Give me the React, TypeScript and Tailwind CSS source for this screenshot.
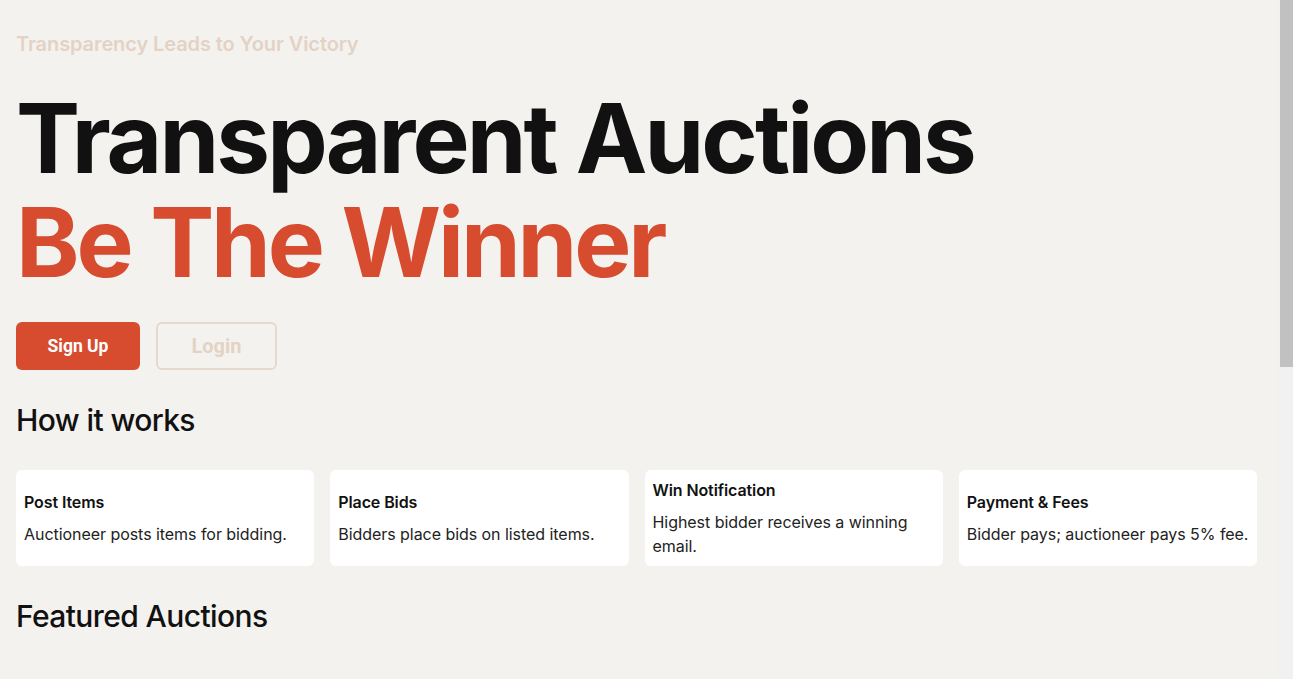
import React from "react";

const steps = [
  { title: "Post Items", desc: "Auctioneer posts items for bidding." },
  { title: "Place Bids", desc: "Bidders place bids on listed items." },
  { title: "Win Notification", desc: "Highest bidder receives a winning email." },
  { title: "Payment & Fees", desc: "Bidder pays; auctioneer pays 5% fee." },
];

export default function App() {
  return (
    <div className="min-h-[1256px] bg-[#f4f2ef]">
      <div
        className="mr-[15px] pl-4 pr-[21px] pt-[30px] text-[#111111]"
        style={{ fontFamily: "Inter, 'Noto Sans', sans-serif" }}
      >
        <p className="text-xl font-semibold leading-7 tracking-[-0.1px] text-[#e3d2c5]">
          Transparency Leads to Your Victory
        </p>
        <h1 className="mt-[28px] text-[96px] font-bold leading-[104px] tracking-[-2.9px] text-[#111111]">
          <span className="block">Transparent Auctions</span>
          <span className="block tracking-[-3.1px] text-[#d74b2f]">Be The Winner</span>
        </h1>
        <div
          className="mt-[28px] flex gap-4"
          style={{ fontFamily: "Roboto, 'Liberation Sans', sans-serif" }}
        >
          <button className="h-12 w-[124px] rounded-md bg-[#d74b2f] text-[17.5px] font-bold text-white">
            Sign Up
          </button>
          <button className="h-12 w-[121px] rounded-md border-2 border-[#e8d8cb] text-[20px] font-bold text-[#e3d2c5]">
            Login
          </button>
        </div>
        <h2 className="mt-8 text-3xl font-medium leading-9 tracking-[-0.6px]">How it works</h2>
        <div className="mt-8 grid grid-cols-4 gap-4">
          {steps.map((s) => (
            <div
              key={s.title}
              className="flex h-24 flex-col justify-center rounded-md bg-white p-2"
            >
              <h3 className="text-base font-semibold leading-6 tracking-[-0.1px] text-[#111111]">
                {s.title}
              </h3>
              <p className="mt-2 text-base leading-6 tracking-[-0.05px] text-[#222222]">{s.desc}</p>
            </div>
          ))}
        </div>
        <h2 className="mt-8 text-3xl font-medium leading-9 tracking-[-0.6px]">Featured Auctions</h2>
      </div>
      <div className="fixed right-0 top-0 h-full w-[15px] bg-[#f1f1f1]">
        <div className="ml-[2px] h-[367px] w-[13px] bg-[#c1c1c1]" />
      </div>
    </div>
  );
}
